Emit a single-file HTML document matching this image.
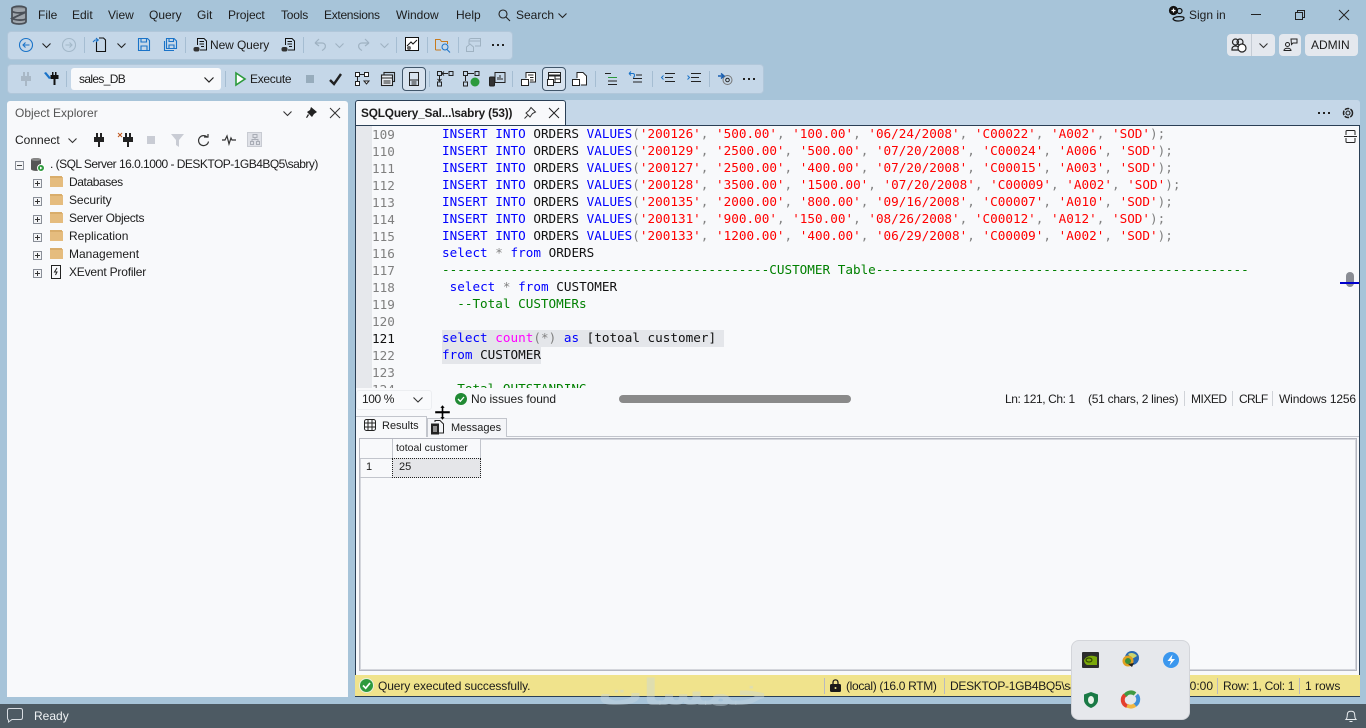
<!DOCTYPE html>
<html><head><meta charset="utf-8"><style>
html,body{margin:0;padding:0;width:1366px;height:728px;overflow:hidden;background:#a7c4d9;font-family:"Liberation Sans",sans-serif;font-size:12px;color:#1c1c1c}
.t{position:absolute;white-space:nowrap;line-height:16px}
.b{position:absolute}
svg{position:absolute;overflow:visible}
.code{position:absolute;left:442px;top:125px;width:900px;height:263px;overflow:hidden;font-family:"DejaVu Sans Mono",monospace;font-size:12.65px;color:#111}
.code div{position:absolute;left:0;white-space:pre;line-height:17px;height:17px}
.k{color:#0000ff}.s{color:#ff0000}.g{color:#808080}.c{color:#008000}.f{color:#ff00ff}
.ln{position:absolute;left:372px;font-family:"DejaVu Sans Mono",monospace;font-size:12.65px;color:#7f7f7f;line-height:17px}
.sep{position:absolute;width:1px;background:#a5bdd2}
.sy{position:absolute;width:1px;background:#b9b9c0;height:16px;top:678px}
.st{letter-spacing:-.27px}
</style></head><body>

<!-- title bar -->
<svg style="left:10px;top:5px" width="18" height="20" viewBox="0 0 18 20" fill="none" stroke="#4a5058" stroke-width="1.800"><ellipse cx="9" cy="3.500" rx="7" ry="2.200" fill="#8b8f94"/><path d="M2 3.500V16.500C2 18 5 19 9 19S16 18 16 16.500V3.500" fill="#9ea5ac"/><path d="M2 6.500C6 8.500 13 8 16 7L2 13.500C6 15.500 13 15.500 16 14"/></svg>
<div class="t" style="left:38px;top:7px">File</div>
<div class="t" style="left:72px;top:7px">Edit</div>
<div class="t" style="left:108px;top:7px">View</div>
<div class="t" style="left:149px;top:7px">Query</div>
<div class="t" style="left:197px;top:7px">Git</div>
<div class="t" style="left:228px;top:7px;letter-spacing:-.1px">Project</div>
<div class="t" style="left:281px;top:7px;letter-spacing:-.2px">Tools</div>
<div class="t" style="left:324px;top:7px;letter-spacing:-.3px">Extensions</div>
<div class="t" style="left:396px;top:7px">Window</div>
<div class="t" style="left:456px;top:7px">Help</div>
<svg style="left:498px;top:9px" width="12" height="12" fill="none" stroke="#222" stroke-width="1.100"><circle cx="5" cy="5" r="4"/><path d="M8 8L12 12"/></svg>
<div class="t" style="left:516px;top:7px">Search</div>
<svg style="left:558px;top:13px" width="9" height="5" fill="none" stroke="#222" stroke-width="1.100"><path d="M.5.5L4.500 4.500L8.500.5"/></svg>

<svg style="left:1169px;top:6px" width="16" height="16" fill="none" stroke="#111" stroke-width="1.200"><circle cx="4.500" cy="4.500" r="4" fill="#111"/><path d="M2.500 4.500H6.500M4.500 2.500V6.500" stroke="#fff"/><circle cx="10.500" cy="5" r="2.500"/><path d="M4 13C5 10 15 10 15 12C15 15.500 6 16 4 13Z"/></svg>
<div class="t" style="left:1189px;top:7px">Sign in</div>
<div class="b" style="left:1251px;top:14px;width:10px;height:1px;background:#222"></div>
<svg style="left:1295px;top:10px" width="10" height="10" fill="none" stroke="#222"><rect x=".5" y="2.500" width="7" height="7"/><path d="M2.500 2.500V.5H9.500V7.500H7.500"/></svg>
<svg style="left:1339px;top:10px" width="10" height="10" fill="none" stroke="#222"><path d="M0 0L10 10M10 0L0 10"/></svg>

<!-- right buttons -->
<div class="b" style="left:1227px;top:34px;width:48px;height:22px;background:#e4e8ee;border-radius:4px"></div>
<div class="b" style="left:1251px;top:34px;width:1px;height:22px;background:#c5ccd4"></div>
<svg style="left:1231px;top:38px" width="16" height="14" fill="none" stroke="#222" stroke-width="1.200"><circle cx="4.500" cy="4" r="3"/><circle cx="9" cy="4" r="3"/><path d="M1 11C1 7 8 7 8 11V12H1Z"/><circle cx="11" cy="10" r="4" fill="#fff"/></svg>
<svg style="left:1259px;top:43px" width="9" height="5" fill="none" stroke="#333" stroke-width="1.100"><path d="M.5.5L4.500 4.500L8.500.5"/></svg>
<div class="b" style="left:1279px;top:34px;width:22px;height:22px;background:#e4e8ee;border-radius:4px"></div>
<svg style="left:1283px;top:38px" width="15" height="14" fill="none" stroke="#222"><circle cx="4.500" cy="6.500" r="2"/><path d="M1 12.500C1 9.500 8 9.500 8 12.500Z"/><path d="M8 1H14V5H10L8.500 6.500Z"/></svg>
<div class="b" style="left:1305px;top:34px;width:53px;height:22px;background:#e4e8ee;border-radius:4px"></div>
<div class="t" style="left:1311px;top:37px">ADMIN</div>

<!-- toolbar 1 -->
<div class="b" style="left:7px;top:31px;width:504px;height:27px;background:#c5d7e8;border:1px solid #b1c7da;border-radius:4px"></div>
<svg style="left:19px;top:38px" width="14" height="14" fill="none" stroke="#1a73c8" stroke-width="1.100"><circle cx="7" cy="7" r="6.500"/><path d="M10.500 7H4M6.500 4.500L4 7L6.500 9.500"/></svg>
<svg style="left:42px;top:43px" width="9" height="5" fill="none" stroke="#222" stroke-width="1.100"><path d="M.5.5L4.500 4.500L8.500.5"/></svg>
<svg style="left:62px;top:38px" width="14" height="14" fill="none" stroke="#a3b8c9" stroke-width="1.100"><circle cx="7" cy="7" r="6.500"/><path d="M3.500 7H10M7.500 4.500L10 7L7.500 9.500"/></svg>
<div class="sep" style="left:84px;top:37px;height:16px"></div>
<svg style="left:93px;top:37px" width="14" height="15" fill="none" stroke="#111" stroke-width="1.100"><path d="M3.500 5V14.500H12.500V3L10.500 1H6"/><path d="M0 5L2 3H6M3 1L5 3L3 5" stroke="#1a73c8"/></svg>
<svg style="left:117px;top:43px" width="9" height="5" fill="none" stroke="#222" stroke-width="1.100"><path d="M.5.5L4.500 4.500L8.500.5"/></svg>
<svg style="left:138px;top:38px" width="12" height="13" fill="none" stroke="#1a73c8" stroke-width="1.100"><path d="M.5.5H9.500L11.500 2.500V12.500H.5Z"/><path d="M3 .5V4H8.500V.5M3 12.500V8H9V12.500"/></svg>
<svg style="left:164px;top:38px" width="13" height="13" fill="none" stroke="#1a73c8" stroke-width="1.100"><path d="M2.500.5H10L12.500 3V10.500H2.500Z"/><path d="M.5 3V12.500H10"/><path d="M5 .5V3.500H9.500V.5M5 10.500V7H10V10.500"/></svg>
<div class="sep" style="left:185px;top:37px;height:16px"></div>
<svg style="left:193px;top:37px" width="16" height="16" fill="none" stroke="#111"><path d="M4.500 8V1.500H11L13.500 4V13H7"/><path d="M6.500 4.500H11M6.500 7H11M8 9.500H11"/><rect x=".5" y="10" width="6" height="4.500" rx="2" fill="#333" stroke="none"/></svg>
<div class="t" style="left:210px;top:37px;letter-spacing:-.1px">New Query</div>
<svg style="left:281px;top:37px" width="16" height="16" fill="none" stroke="#111"><path d="M4.500 8V1.500H11L13.500 4V13H7"/><path d="M6.500 4.500H11M6.500 7H11M8 9.500H11"/><rect x=".5" y="10" width="6" height="4.500" rx="2" fill="#333" stroke="none"/></svg>
<div class="sep" style="left:303px;top:37px;height:16px"></div>
<svg style="left:314px;top:38px" width="13" height="13" fill="none" stroke="#9fb2c2" stroke-width="1.200"><path d="M1 5H8C12 5 13 10 8 12.500M1 5L5 1M1 5L5 8"/></svg>
<svg style="left:335px;top:43px" width="9" height="5" fill="none" stroke="#9fb2c2" stroke-width="1.100"><path d="M.5.5L4.500 4.500L8.500.5"/></svg>
<svg style="left:357px;top:38px" width="13" height="13" fill="none" stroke="#9fb2c2" stroke-width="1.200"><path d="M12 5H5C1 5 0 10 5 12.500M12 5L8 1M12 5L8 8"/></svg>
<svg style="left:380px;top:43px" width="9" height="5" fill="none" stroke="#9fb2c2" stroke-width="1.100"><path d="M.5.5L4.500 4.500L8.500.5"/></svg>
<div class="sep" style="left:396px;top:37px;height:16px"></div>
<svg style="left:405px;top:37px" width="14" height="14" fill="#fff" stroke="#111"><rect x=".5" y=".5" width="13" height="13"/><path d="M2 9L6 5L8 7L12 3" fill="none"/><circle cx="4" cy="11" r="2" fill="#666" stroke="none"/></svg>
<div class="sep" style="left:427px;top:37px;height:16px"></div>
<svg style="left:435px;top:38px" width="16" height="15" fill="none" stroke="#c77a1e"><path d="M.5 12V1.500H5L6.500 3.500H12.500V6M.5 12H6"/><circle cx="10" cy="9" r="3" stroke="#1a73c8"/><path d="M12 11.500L15 14.500" stroke="#1a73c8"/></svg>
<div class="sep" style="left:458px;top:37px;height:16px"></div>
<svg style="left:466px;top:38px" width="15" height="14" fill="none" stroke="#9fb2c2"><path d="M3 6V3C3 1 4 .5 5 .5H14.500V8H9"/><path d="M3 3H14.500"/><path d="M.5 9L4 6L7.500 9V13.500H.5Z"/></svg>
<svg style="left:492px;top:44px" width="13" height="2" fill="#222"><rect x="0" width="2" height="2"/><rect x="5" width="2" height="2"/><rect x="10" width="2" height="2"/></svg>

<!-- toolbar 2 -->
<div class="b" style="left:7px;top:64px;width:755px;height:28px;background:#c5d7e8;border:1px solid #b1c7da;border-radius:4px"></div>
<svg style="left:21px;top:72px" width="10" height="14" fill="#a9b8c6"><rect x="2" y="0" width="2" height="5"/><rect x="6" y="0" width="2" height="5"/><rect x="0" y="4" width="10" height="5"/><rect x="4" y="8" width="2" height="6"/></svg>
<svg style="left:44px;top:71px" width="15" height="14" fill="#111"><rect x="8" y="1" width="1.500" height="4"/><rect x="11" y="1" width="1.500" height="4"/><rect x="6.500" y="4" width="8" height="4"/><rect x="9.500" y="8" width="2" height="6"/><path d="M0 2L2 1L7 7L5 8Z" fill="#1a73c8"/></svg>
<div class="sep" style="left:66px;top:71px;height:16px"></div>
<div class="b" style="left:71px;top:68px;width:150px;height:22px;background:#f8f9fb;border-radius:3px"></div>
<div class="t" style="left:79px;top:71px;letter-spacing:-.65px">sales_DB</div>
<svg style="left:204px;top:77px" width="10" height="6" fill="none" stroke="#222" stroke-width="1.200"><path d="M.5.5L5 5L9.500.5"/></svg>
<div class="sep" style="left:225px;top:71px;height:16px"></div>
<svg style="left:235px;top:72px" width="11" height="14"><path d="M1 1L10 7L1 13Z" fill="#fff" stroke="#2c9a3c" stroke-width="1.600"/></svg>
<div class="t" style="left:250px;top:71px;letter-spacing:-.3px">Execute</div>
<div class="b" style="left:306px;top:75px;width:8px;height:8px;background:#97acbc"></div>
<svg style="left:329px;top:73px" width="14" height="13" fill="none" stroke="#222" stroke-width="2.400"><path d="M1 7L5 11L12 1"/></svg>
<svg style="left:355px;top:72px" width="15" height="14" fill="#fff" stroke="#222"><rect x=".5" y=".5" width="4" height="4"/><rect x="9.500" y=".5" width="4" height="4"/><rect x=".5" y="9.500" width="4" height="4"/><path d="M4.500 2.500H9.500M2.500 4.500V9.500" fill="none"/><path d="M9 9H14L11.500 12Z"/></svg>
<svg style="left:381px;top:72px" width="14" height="14" fill="none" stroke="#222" stroke-width="1.100"><rect x="3" y=".5" width="10.500" height="9"/><rect x=".5" y="3" width="11" height="10.500" fill="#e8edf2"/><path d="M.5 6H11.500M2.500 9H9.500M2.500 11H9.500"/></svg>
<div class="b" style="left:402px;top:67px;width:22px;height:22px;border:1px solid #41566a;border-radius:4px;background:#d8e3ef"></div>
<svg style="left:409px;top:72px" width="10" height="14" fill="none" stroke="#222"><rect x=".5" y=".5" width="9" height="13"/><path d="M.5 8H9.500M2.500 10H7.500M2.500 12H7.500"/></svg>
<div class="sep" style="left:429px;top:71px;height:16px"></div>
<svg style="left:437px;top:71px" width="17" height="16" fill="none" stroke="#222"><rect x=".5" y=".5" width="4" height="4"/><rect x="12" y=".5" width="4" height="4"/><path d="M5 2.500H11M7 .5L5 2.500L7 4.500"/><rect x=".5" y="11" width="4" height="4"/><path d="M2.500 5V10M.5 8L2.500 10L4.500 8"/></svg>
<svg style="left:463px;top:71px" width="17" height="16" fill="none" stroke="#222"><rect x=".5" y=".5" width="4" height="4"/><rect x="12" y=".5" width="4" height="4"/><path d="M5 2.500H11"/><rect x=".5" y="11" width="4" height="4"/><path d="M2.500 5V10"/><circle cx="12" cy="11" r="4.500" fill="#2c9a3c" stroke="none"/></svg>
<svg style="left:489px;top:72px" width="17" height="15" fill="none" stroke="#222"><rect x="6" y=".5" width="10" height="10"/><path d="M9 8V5M11 8V3M13 8V6"/><rect x=".5" y="5" width="5" height="9" rx="1" fill="#333"/></svg>
<div class="sep" style="left:512px;top:71px;height:16px"></div>
<svg style="left:521px;top:72px" width="15" height="14" fill="#fff" stroke="#222"><path d="M5 6V.5H14.500V10H9"/><path d="M7 3H12.500M9 5.500H12.500M9 8H12.500"/><rect x=".5" y="7.500" width="7" height="6" fill="#fff"/></svg>
<div class="b" style="left:542px;top:67px;width:22px;height:22px;border:1px solid #41566a;border-radius:4px;background:#d8e3ef"></div>
<svg style="left:547px;top:72px" width="14" height="14" fill="#fff" stroke="#222"><rect x="1.500" y=".5" width="12" height="10"/><path d="M1.500 3.500H13.500" stroke-width="2"/><path d="M8 3V10.500M8 7H13.500"/><rect x=".5" y="7.500" width="6" height="6"/></svg>
<svg style="left:572px;top:72px" width="15" height="14" fill="#fff" stroke="#222"><path d="M5 6V.5H11L14.500 4V13H9"/><rect x=".5" y="7.500" width="7" height="6"/></svg>
<div class="sep" style="left:595px;top:71px;height:16px"></div>
<svg style="left:605px;top:73px" width="13" height="12" fill="none" stroke="#222"><path d="M0 .5H6"/><path d="M3 4.500H12" stroke="#2c9a3c"/><path d="M3 8H12M3 11.500H12"/></svg>
<svg style="left:628px;top:71px" width="15" height="14" fill="none" stroke="#222"><path d="M5 7.500H14M5 11H14M8 4H14"/><path d="M1 2.500H5C7 2.500 7 6 5 6.500M1 2.500L3 .5M1 2.500L3 4.500" stroke="#1a73c8"/></svg>
<div class="sep" style="left:652px;top:71px;height:16px"></div>
<svg style="left:661px;top:73px" width="14" height="12" fill="none" stroke="#222"><path d="M4 .5H14M4 4.500H12M4 8.500H14"/><path d="M2.500 2.500L.5 4.500L2.500 6.500" stroke="#1a73c8"/></svg>
<svg style="left:687px;top:73px" width="14" height="12" fill="none" stroke="#222"><path d="M4 .5H14M4 4.500H12M4 8.500H14"/><path d="M.5 2.500L2.500 4.500L.5 6.500" stroke="#1a73c8"/></svg>
<div class="sep" style="left:709px;top:71px;height:16px"></div>
<svg style="left:718px;top:72px" width="15" height="14" fill="none" stroke="#222"><circle cx="9.500" cy="8" r="4.500" stroke="#777"/><circle cx="9.500" cy="8" r="1.800"/><path d="M0 4H5M3 1.500L6 4L3 6.500" stroke="#1a5fb0" stroke-width="1.500"/></svg>
<svg style="left:743px;top:78px" width="13" height="2" fill="#222"><rect x="0" width="2" height="2"/><rect x="5" width="2" height="2"/><rect x="10" width="2" height="2"/></svg>

<!-- object explorer -->
<div class="b" style="left:7px;top:101px;width:341px;height:596px;background:#f8f9fb;border-radius:3px 3px 0 0"></div>
<div class="t" style="left:15px;top:105px;color:#555">Object Explorer</div>
<svg style="left:283px;top:111px" width="9" height="5" fill="none" stroke="#333" stroke-width="1.100"><path d="M.5.5L4.500 4.500L8.500.5"/></svg>
<svg style="left:306px;top:107px" width="11" height="12" fill="#222"><path d="M5 0L11 5L8 7L6 10L1 5L4 3ZM3 8L1 11L0 10.500L2 7Z"/></svg>
<svg style="left:330px;top:108px" width="10" height="10" fill="none" stroke="#333"><path d="M0 0L10 10M10 0L0 10"/></svg>

<div class="t" style="left:15px;top:132px">Connect</div>
<svg style="left:68px;top:138px" width="9" height="5" fill="none" stroke="#333" stroke-width="1.100"><path d="M.5.5L4.500 4.500L8.500.5"/></svg>
<svg style="left:94px;top:133px" width="10" height="14" fill="#222"><rect x="2" y="0" width="2" height="5"/><rect x="6" y="0" width="2" height="5"/><rect x="0" y="4" width="10" height="5"/><rect x="4" y="8" width="2" height="6"/></svg>
<svg style="left:118px;top:133px" width="15" height="14"><path d="M0 0L4 4M4 0L0 4" stroke="#c0561c" fill="none"/><g fill="#222"><rect x="7" y="0" width="2" height="5"/><rect x="11" y="0" width="2" height="5"/><rect x="5" y="4" width="10" height="5"/><rect x="9" y="8" width="2" height="6"/></g></svg>
<div class="b" style="left:147px;top:136px;width:8px;height:8px;background:#c9ccd4"></div>
<svg style="left:171px;top:134px" width="13" height="13" fill="#c9ccd4"><path d="M0 0H13L8 6V13L5 11V6Z"/></svg>
<svg style="left:197px;top:134px" width="12" height="13" fill="none" stroke="#333" stroke-width="1.200"><path d="M10.500 3.500A5 5 0 1 0 11.500 7.500"/><path d="M7 3H11V0"/></svg>
<svg style="left:222px;top:135px" width="14" height="10" fill="none" stroke="#333" stroke-width="1.200"><path d="M0 5H3L5 1L7 9L9 3L10 5H14"/></svg>
<div class="b" style="left:247px;top:132px;width:15px;height:15px;background:#dfe1e7;border:1px solid #c8cbd2;box-sizing:border-box"></div>
<svg style="left:250px;top:134px" width="10" height="11" fill="none" stroke="#a9adb6"><rect x="3" y=".5" width="4" height="3"/><rect x=".5" y="7.500" width="3" height="3"/><rect x="6.500" y="7.500" width="3" height="3"/><path d="M5 3.500V5.500H2V7.500M5 5.500H8V7.500"/></svg>

<div class="b" style="left:15px;top:161px;width:7px;height:7px;border:1px solid #8a8f98;background:#f4f5f7"></div>
<div class="b" style="left:17px;top:165px;width:5px;height:1px;background:#444"></div>
<svg style="left:31px;top:157px" width="14" height="15"><path d="M0 2.500C0 .5 10 .5 10 2.500V12C10 14.500 0 14.500 0 12Z" fill="#555"/><ellipse cx="5" cy="2.500" rx="5" ry="1.500" fill="#888"/><circle cx="10" cy="11" r="3.500" fill="#2c9a3c" stroke="#fff"/><path d="M9 9.500L11.500 11L9 12.500Z" fill="#fff"/></svg>
<div class="t" style="left:50px;top:156px;letter-spacing:-.52px">. (SQL Server 16.0.1000 - DESKTOP-1GB4BQ5\sabry)</div>

<style>
.pl{position:absolute;left:33px;width:7px;height:7px;border:1px solid #8a8f98;background:#f4f5f7}
.pl:before{content:"";position:absolute;left:1px;top:3px;width:5px;height:1px;background:#333}
.pl:after{content:"";position:absolute;left:3px;top:1px;width:1px;height:5px;background:#333}
.fd{position:absolute;left:50px;width:13px;height:10px;background:#e5bc7e}
.fd:before{content:"";position:absolute;left:0;top:-1.500px;width:12px;height:2px;background:#d9ad6b}
</style>
<div class="pl" style="top:179px"></div><div class="fd" style="top:177px"></div><div class="t" style="left:69px;top:174px;letter-spacing:-.4px">Databases</div>
<div class="pl" style="top:197px"></div><div class="fd" style="top:195px"></div><div class="t" style="left:69px;top:192px;letter-spacing:-.1px">Security</div>
<div class="pl" style="top:215px"></div><div class="fd" style="top:213px"></div><div class="t" style="left:69px;top:210px;letter-spacing:-.3px">Server Objects</div>
<div class="pl" style="top:233px"></div><div class="fd" style="top:231px"></div><div class="t" style="left:69px;top:228px">Replication</div>
<div class="pl" style="top:251px"></div><div class="fd" style="top:249px"></div><div class="t" style="left:69px;top:246px">Management</div>
<div class="pl" style="top:269px"></div>
<svg style="left:50px;top:265px" width="12" height="14" fill="none" stroke="#222"><path d="M1.500.5H10.500V13.500H1.500Z"/><path d="M7 3L4.500 7H7L5.500 10" stroke-width="1"/></svg>
<div class="t" style="left:69px;top:264px;letter-spacing:-.2px">XEvent Profiler</div>

<!-- document tabs -->
<div class="b" style="left:355px;top:100px;width:1005px;height:25px;background:#c5d7e8;border-radius:3px 3px 0 0"></div>
<div class="b" style="left:355px;top:100px;width:211px;height:25px;background:#f8f9fb;border:1px solid #2a3f55;border-bottom:0;box-sizing:border-box;border-radius:3px 3px 0 0"></div>
<div class="t" style="left:361px;top:105px;font-weight:bold;font-size:11.800px;letter-spacing:-.15px">SQLQuery_Sal...\sabry (53))</div>
<svg style="left:524px;top:107px" width="12" height="12" fill="none" stroke="#333"><path d="M7 .5L11.500 5L8.500 6.500L6 10L2 6L5 3.500ZM3.500 8.500L.5 11.500"/></svg>
<svg style="left:549px;top:108px" width="10" height="10" fill="none" stroke="#222"><path d="M0 0L10 10M10 0L0 10"/></svg>
<svg style="left:1318px;top:112px" width="13" height="2" fill="#222"><rect x="0" width="2" height="2"/><rect x="5" width="2" height="2"/><rect x="10" width="2" height="2"/></svg>
<svg style="left:1342px;top:107px" width="12" height="12" fill="none" stroke="#222" stroke-width="1.100"><circle cx="6" cy="6" r="2"/><circle cx="6" cy="6" r="4.500" stroke-dasharray="4.700 1.200" stroke-width="1.500"/></svg>

<!-- editor -->
<div class="b" style="left:355px;top:125px;width:1005px;height:572px;background:#f8f9fb;border-top:1px solid #2a3f55;box-sizing:border-box;border-left:1px solid #2a3f55;border-right:1px solid #2a3f55"></div>
<div class="b" style="left:356px;top:126px;width:16px;height:262px;background:#e6e8ec"></div>
<div class="b" style="left:442px;top:330px;width:282px;height:17px;background:#e4e6ea"></div>
<div class="b" style="left:442px;top:347px;width:99px;height:17px;background:#e4e6ea"></div>

<div class="b" style="left:372px;top:125px;width:60px;height:263px;overflow:hidden">
<div class="ln" style="left:0;top:1px">109</div><div class="ln" style="left:0;top:18px">110</div><div class="ln" style="left:0;top:35px">111</div><div class="ln" style="left:0;top:52px">112</div><div class="ln" style="left:0;top:69px">113</div><div class="ln" style="left:0;top:86px">114</div><div class="ln" style="left:0;top:103px">115</div><div class="ln" style="left:0;top:120px">116</div><div class="ln" style="left:0;top:137px">117</div><div class="ln" style="left:0;top:154px">118</div><div class="ln" style="left:0;top:171px">119</div><div class="ln" style="left:0;top:188px">120</div><div class="ln" style="left:0;top:205px;color:#111">121</div><div class="ln" style="left:0;top:222px">122</div><div class="ln" style="left:0;top:239px">123</div><div class="ln" style="left:0;top:256px">124</div>
</div>

<div class="code">
<div style="top:0"><span class="k">INSERT INTO</span> ORDERS <span class="k">VALUES</span><span class="g">(</span><span class="s">'200126'</span><span class="g">,</span> <span class="s">'500.00'</span><span class="g">,</span> <span class="s">'100.00'</span><span class="g">,</span> <span class="s">'06/24/2008'</span><span class="g">,</span> <span class="s">'C00022'</span><span class="g">,</span> <span class="s">'A002'</span><span class="g">,</span> <span class="s">'SOD'</span><span class="g">);</span></div>
<div style="top:17px"><span class="k">INSERT INTO</span> ORDERS <span class="k">VALUES</span><span class="g">(</span><span class="s">'200129'</span><span class="g">,</span> <span class="s">'2500.00'</span><span class="g">,</span> <span class="s">'500.00'</span><span class="g">,</span> <span class="s">'07/20/2008'</span><span class="g">,</span> <span class="s">'C00024'</span><span class="g">,</span> <span class="s">'A006'</span><span class="g">,</span> <span class="s">'SOD'</span><span class="g">);</span></div>
<div style="top:34px"><span class="k">INSERT INTO</span> ORDERS <span class="k">VALUES</span><span class="g">(</span><span class="s">'200127'</span><span class="g">,</span> <span class="s">'2500.00'</span><span class="g">,</span> <span class="s">'400.00'</span><span class="g">,</span> <span class="s">'07/20/2008'</span><span class="g">,</span> <span class="s">'C00015'</span><span class="g">,</span> <span class="s">'A003'</span><span class="g">,</span> <span class="s">'SOD'</span><span class="g">);</span></div>
<div style="top:51px"><span class="k">INSERT INTO</span> ORDERS <span class="k">VALUES</span><span class="g">(</span><span class="s">'200128'</span><span class="g">,</span> <span class="s">'3500.00'</span><span class="g">,</span> <span class="s">'1500.00'</span><span class="g">,</span> <span class="s">'07/20/2008'</span><span class="g">,</span> <span class="s">'C00009'</span><span class="g">,</span> <span class="s">'A002'</span><span class="g">,</span> <span class="s">'SOD'</span><span class="g">);</span></div>
<div style="top:68px"><span class="k">INSERT INTO</span> ORDERS <span class="k">VALUES</span><span class="g">(</span><span class="s">'200135'</span><span class="g">,</span> <span class="s">'2000.00'</span><span class="g">,</span> <span class="s">'800.00'</span><span class="g">,</span> <span class="s">'09/16/2008'</span><span class="g">,</span> <span class="s">'C00007'</span><span class="g">,</span> <span class="s">'A010'</span><span class="g">,</span> <span class="s">'SOD'</span><span class="g">);</span></div>
<div style="top:85px"><span class="k">INSERT INTO</span> ORDERS <span class="k">VALUES</span><span class="g">(</span><span class="s">'200131'</span><span class="g">,</span> <span class="s">'900.00'</span><span class="g">,</span> <span class="s">'150.00'</span><span class="g">,</span> <span class="s">'08/26/2008'</span><span class="g">,</span> <span class="s">'C00012'</span><span class="g">,</span> <span class="s">'A012'</span><span class="g">,</span> <span class="s">'SOD'</span><span class="g">);</span></div>
<div style="top:102px"><span class="k">INSERT INTO</span> ORDERS <span class="k">VALUES</span><span class="g">(</span><span class="s">'200133'</span><span class="g">,</span> <span class="s">'1200.00'</span><span class="g">,</span> <span class="s">'400.00'</span><span class="g">,</span> <span class="s">'06/29/2008'</span><span class="g">,</span> <span class="s">'C00009'</span><span class="g">,</span> <span class="s">'A002'</span><span class="g">,</span> <span class="s">'SOD'</span><span class="g">);</span></div>
<div style="top:119px"><span class="k">select</span> <span class="g">*</span> <span class="k">from</span> ORDERS</div>
<div style="top:136px" class="c">-------------------------------------------CUSTOMER Table-------------------------------------------------</div>
<div style="top:153px"> <span class="k">select</span> <span class="g">*</span> <span class="k">from</span> CUSTOMER</div>
<div style="top:170px" class="c">  --Total CUSTOMERs</div>
<div style="top:204px"><span class="k">select</span> <span class="f">count</span><span class="g">(*)</span> <span class="k">as</span> [totoal customer]</div>
<div style="top:221px"><span class="k">from</span> CUSTOMER</div>
<div style="top:255px" class="c">  Total OUTSTANDING</div>
</div>

<svg style="left:1344px;top:130px" width="13" height="13" fill="none" stroke="#222"><path d="M2 5V1.500Q2 .5 3 .5H10Q11 .5 11 1.500V5M2 8V11.500Q2 12.500 3 12.500H10Q11 12.500 11 11.500V8M0 6.500H13"/></svg>
<div class="b" style="left:1346px;top:272px;width:8px;height:15px;background:#8a8d94;border-radius:4px"></div>
<div class="b" style="left:1340px;top:281.500px;width:19px;height:2px;background:#0000cc"></div>

<!-- editor status -->
<div class="b" style="left:356px;top:388px;width:1003px;height:22px;background:#f8f9fb"></div>
<div class="b" style="left:356px;top:390px;width:74px;height:18px;border:1px solid #eceef1;border-radius:3px;background:#f9fafc"></div>
<div class="t" style="left:362px;top:391px;letter-spacing:-.4px">100 %</div>
<svg style="left:413px;top:397px" width="10" height="6" fill="none" stroke="#333" stroke-width="1.100"><path d="M.5.5L5 5L9.500.5"/></svg>
<svg style="left:455px;top:393px" width="12" height="12"><circle cx="6" cy="6" r="6" fill="#218a34"/><path d="M3 6L5.300 8.300L9 4" fill="none" stroke="#fff" stroke-width="1.300"/></svg>
<div class="t" style="left:471px;top:391px;letter-spacing:-.07px">No issues found</div>
<div class="b" style="left:619px;top:395px;width:232px;height:8px;background:#8a8a8a;border-radius:4px"></div>
<div class="t st" style="left:1005px;top:391px;letter-spacing:-.4px">Ln: 121, Ch: 1</div>
<div class="t st" style="left:1088px;top:391px">(51 chars, 2 lines)</div>
<div class="t st" style="left:1191px;top:391px;letter-spacing:-.5px">MIXED</div>
<div class="t st" style="left:1239px;top:391px;letter-spacing:-.7px">CRLF</div>
<div class="t st" style="left:1279px;top:391px;letter-spacing:-.15px">Windows 1256</div>
<div class="b" style="left:1184px;top:391px;width:1px;height:15px;background:#d0d3d8"></div>
<div class="b" style="left:1232px;top:391px;width:1px;height:15px;background:#d0d3d8"></div>
<div class="b" style="left:1272px;top:391px;width:1px;height:15px;background:#d0d3d8"></div>

<!-- result tabs -->
<div class="b" style="left:356px;top:436px;width:1003px;height:1px;background:#c2c5cc"></div>
<div class="b" style="left:427px;top:418px;width:78px;height:18px;background:#f4f5f8;border:1px solid #c2c5cc;border-bottom:0"></div>
<div class="b" style="left:356px;top:416px;width:71px;height:21px;background:#f8f9fb;border-top:1px solid #c2c5cc;border-right:1px solid #c2c5cc;box-sizing:border-box"></div>
<svg style="left:364px;top:419px" width="12" height="12" fill="none" stroke="#222"><rect x=".5" y=".5" width="11" height="11" rx="2"/><path d="M4 .5V11.500M8 .5V11.500M.5 4H11.500M.5 8H11.500"/></svg>
<div class="t" style="left:382px;top:418px;font-size:11px">Results</div>
<svg style="left:431px;top:420px" width="14" height="15" fill="none" stroke="#222"><path d="M4 2V.5H9L12.500 4V13H8"/><rect x=".5" y="4" width="7" height="10" fill="#222"/><path d="M2 7H6M2 9H6M2 11H6" stroke="#fff"/></svg>
<div class="t" style="left:451px;top:420px;font-size:11px">Messages</div>
<!-- cursor -->
<svg style="left:435px;top:405px" width="15" height="15" fill="#000" stroke="#fff" stroke-width=".4"><path d="M7.500 0L10 3H8.500V6H15V8.500H8.500V12H10L7.500 15L5 12H6.500V8.500H0V6H6.500V3H5Z"/></svg>

<!-- grid -->
<div class="b" style="left:359px;top:438px;width:996px;height:231px;border:1px solid #b5b7c0;outline:1px solid #d4d6dc;outline-offset:-2px;background:#f8f9fb"></div>
<div class="b" style="left:360px;top:439px;width:32px;height:19px;background:#f8f9fb;border-right:1px solid #c2c5cc;border-bottom:1px solid #c2c5cc"></div>
<div class="b" style="left:393px;top:439px;width:87px;height:19px;background:#f8f9fb;border-right:1px solid #c2c5cc;border-bottom:1px solid #c2c5cc"></div>
<div class="t" style="left:396px;top:440px;font-size:10.500px">totoal customer</div>
<div class="b" style="left:360px;top:459px;width:32px;height:18px;border-right:1px solid #c2c5cc;border-bottom:1px solid #c2c5cc"></div>
<div class="t" style="left:366px;top:459px;font-size:11px">1</div>
<div class="b" style="left:392px;top:458px;width:87px;height:18px;background:#e5e6e9;border:1px dotted #222"></div>
<div class="t" style="left:399px;top:459px;font-size:11px">25</div>

<!-- yellow status -->
<div class="b" style="left:355px;top:675px;width:1005px;height:22px;background:#f0e38c;border-bottom:1px solid #2a3f55;box-sizing:border-box"></div>
<svg style="left:359px;top:678px" width="15" height="15"><circle cx="7.500" cy="7.500" r="7" fill="#2e9a3e" stroke="#e8f0e0"/><path d="M4 7.500L6.700 10.200L11 5" fill="none" stroke="#fff" stroke-width="1.700"/></svg>
<div class="t" style="left:378px;top:678px;letter-spacing:-.1px">Query executed successfully.</div>
<div class="sy" style="left:824px"></div>
<svg style="left:830px;top:679px" width="11" height="13" fill="#1a1a1a"><path d="M3 5V3.500C3 0 8 0 8 3.500V5" fill="none" stroke="#1a1a1a" stroke-width="1.300"/><rect x="0" y="5" width="11" height="8" rx="1.500"/><circle cx="5.500" cy="9" r="1" fill="#f0e38c"/></svg>
<div class="t" style="left:846px;top:678px;letter-spacing:-.33px">(local) (16.0 RTM)</div>
<div class="sy" style="left:944px"></div>
<div class="t" style="left:950px;top:678px;letter-spacing:-.3px">DESKTOP-1GB4BQ5\sabry</div>
<div class="t" style="left:1183px;top:678px">00:00</div>
<div class="sy" style="left:1217px"></div>
<div class="t" style="left:1223px;top:678px;letter-spacing:-.3px">Row: 1, Col: 1</div>
<div class="sy" style="left:1299px"></div>
<div class="t" style="left:1305px;top:678px">1 rows</div>

<!-- bottom bar -->
<div class="b" style="left:0;top:704px;width:1366px;height:24px;background:#4d5a63"></div>
<svg style="left:7px;top:708px" width="16" height="15" fill="none" stroke="#d8dde2"><path d="M2.500.5H13.500Q15.500.5 15.500 2.500V9.500Q15.500 11.500 13.500 11.500H5L1.500 14V12Q.5 11.500.5 9.500V2.500Q.5.5 2.500.5Z"/></svg>
<div class="t" style="left:34px;top:708px;color:#eef1f3">Ready</div>
<svg style="left:1345px;top:709px" width="12" height="14" fill="none" stroke="#e8ecef"><path d="M1 10.500C2.500 9 2 7 2.500 4.500C3 1.500 9 1.500 9.500 4.500C10 7 9.500 9 11 10.500Z"/><path d="M4.500 12.500H7.500"/></svg>

<!-- watermark -->
<div class="t" dir="rtl" style="left:600px;top:674px;width:166px;height:40px;line-height:40px;font-family:'DejaVu Sans',sans-serif;font-size:36px;font-weight:bold;color:rgba(200,215,225,.42);text-align:center;transform:scaleX(1.25)">خمسات</div>

<!-- tray popover -->
<div class="b" style="left:1071px;top:640px;width:117px;height:78px;background:#e6e8ec;border:1px solid #d3d5da;border-radius:8px"></div>
<div class="b" style="left:1082px;top:652px;width:17px;height:16px;background:#2c2c2c;border-radius:1px"></div>
<svg style="left:1084px;top:655px" width="13" height="10"><path d="M0 5C3 0 9 0 13 2V10H3C1 9 0 7 0 5Z" fill="#7aa80a"/><ellipse cx="5" cy="5" rx="3" ry="2" fill="none" stroke="#2c3c00"/></svg>
<svg style="left:1122px;top:651px" width="18" height="17"><circle cx="10" cy="7" r="7" fill="#2868b0"/><path d="M6 3C9 1 13 2 15 5L10 8Z" fill="#c9d470"/><circle cx="6" cy="10" r="5.500" fill="#e0a020"/><circle cx="6" cy="10" r="3" fill="#3a8f3a"/><path d="M6 13L12 12L10 16Z" fill="#222"/></svg>
<svg style="left:1163px;top:652px" width="16" height="16"><circle cx="8" cy="8" r="8" fill="#3b97ee"/><path d="M9.500 2.500L4.500 9H8L6.500 13.500L12 7H8.500Z" fill="#fff"/></svg>
<svg style="left:1084px;top:692px" width="14" height="16"><path d="M7 0L14 2.500V8C14 12 10 15 7 16C4 15 0 12 0 8V2.500Z" fill="#1a7a46"/><ellipse cx="7" cy="8" rx="3" ry="4" fill="#eaf3ea"/></svg>
<svg style="left:1122px;top:691px" width="17" height="17" fill="none" stroke-width="4"><path d="M3 5A6.500 6.500 0 0 1 13 3" stroke="#3f9a43"/><path d="M14.500 4A6.500 6.500 0 0 1 12 14.500" stroke="#3f8fd9"/><path d="M13 14A6.500 6.500 0 0 1 5 14.500" stroke="#f2b640"/><path d="M5 15A6.500 6.500 0 0 1 3 4" stroke="#e43f2e"/></svg>
</body></html>
